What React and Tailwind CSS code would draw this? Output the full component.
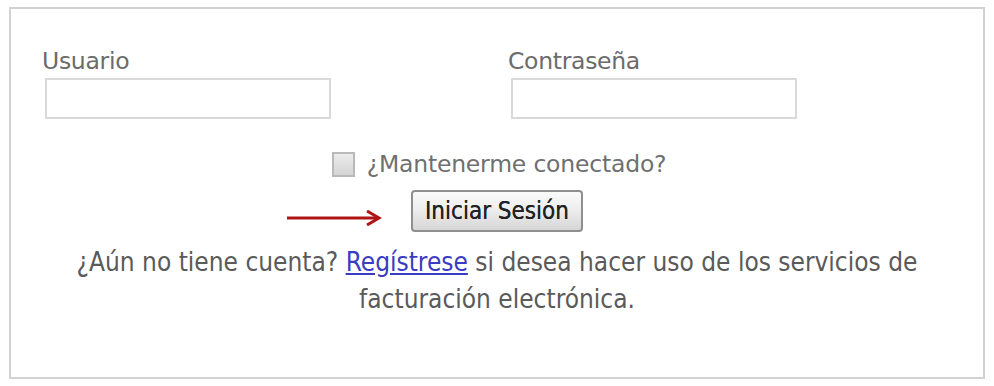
import React from 'react';

const labelFont = { fontFamily: '"DejaVu Sans", Verdana, sans-serif' };
const narrowFont = { fontFamily: '"DejaVu Sans Condensed", Tahoma, sans-serif' };

function Field({ label, type = 'text' }) {
  return (
    <div className="flex flex-col">
      <label className="text-[23.5px] leading-[28px] text-[#6b6b6b] tracking-[-0.3px]">{label}</label>
      <input
        type={type}
        className="mt-[3px] ml-[3px] h-[41px] w-[286px] border-2 border-[#d9d9d9] bg-white outline-none"
      />
    </div>
  );
}

export default function App() {
  return (
    <div className="h-[386px] w-[994px] bg-white px-[9px] pt-[7px]" style={labelFont}>
      <div className="h-[372px] border-2 border-[#d2d2d2] bg-white">
        <div className="grid grid-cols-[466px_1fr] pl-[31px] pt-[38px]">
          <Field label="Usuario" />
          <Field label="Contraseña" type="password" />
        </div>

        <div className="mt-[31px] flex items-center justify-center gap-[12px] pl-[4px]">
          <span className="h-[25px] w-[23px] border-2 border-[#b9b9b9] bg-gradient-to-b from-[#ececec] to-[#d4d4d4]" />
          <span className="text-[23.5px] leading-[28px] text-[#6f6f6f] tracking-[-0.2px]">¿Mantenerme conectado?</span>
        </div>

        <div className="relative mt-[12px] flex justify-center">
          <svg className="absolute left-[276px] top-[20px]" width="96" height="16" viewBox="0 0 96 16">
            <path d="M0 8 H90" stroke="#b01414" strokeWidth="3" />
            <path d="M80 1 L92 8 L80 15" stroke="#b01414" strokeWidth="3" fill="none" />
          </svg>
          <button
            type="button"
            className="h-[42px] w-[172px] rounded-[4px] border-2 border-[#8f8f8f] bg-gradient-to-b from-[#fbfbfb] via-[#ececec] to-[#d6d6d6] text-[24px] leading-[36px] text-[#222] [text-shadow:0_0_0.6px_#222]"
            style={narrowFont}
          >
            Iniciar Sesión
          </button>
        </div>

        <p
          className="mx-auto mt-[12px] w-[900px] text-center text-[26px] leading-[37px] text-[#5a5a5a]"
          style={narrowFont}
        >
          ¿Aún no tiene cuenta?{' '}
          <a href="#" className="text-[#3b3bc4] underline">Regístrese</a>{' '}
          si desea hacer uso de los servicios de facturación electrónica.
        </p>
      </div>
    </div>
  );
}
